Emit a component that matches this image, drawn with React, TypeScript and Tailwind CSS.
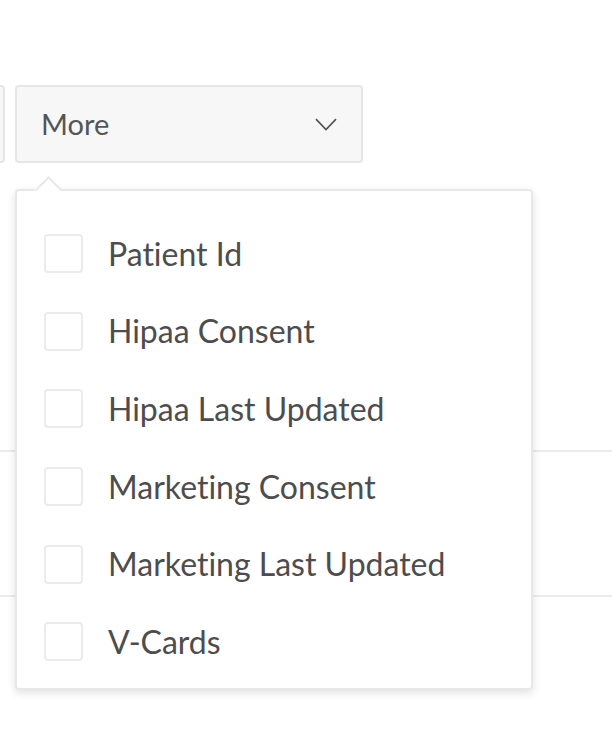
const columns = [
  "Patient Id",
  "Hipaa Consent",
  "Hipaa Last Updated",
  "Marketing Consent",
  "Marketing Last Updated",
  "V-Cards",
];

export default function App() {
  return (
    <div className="relative h-[742px] w-[612px] overflow-hidden bg-white font-['Lato','Noto_Sans',sans-serif] text-[#4d4d4d] [font-variant-ligatures:none]">
      {/* filter bar */}
      <div className="flex gap-[10px] pt-[85px]">
        <div className="-ml-[35px] h-[78px] w-[40px] shrink-0 rounded-[4px] border-2 border-[#e6e6e6] bg-[#f7f7f7]" />
        <div className="relative">
          <button className="flex h-[78px] w-[348px] items-center justify-between rounded-[4px] border-2 border-[#e6e6e6] bg-[#f7f7f7] pl-[24px] pr-[24px] text-[29px] text-[#555]">
            <span>More</span>
            <svg width="22" height="13" viewBox="0 0 22 13" fill="none">
              <polyline points="1,1.2 11,11.5 21,1.2" stroke="#555" strokeWidth="1.7" />
            </svg>
          </button>

          {/* dropdown menu */}
          <div className="absolute left-0 top-full z-10 mt-[26px] w-[518px] rounded-[4px] border-2 border-[#e8e8e8] bg-white pb-[7px] pt-[24px] shadow-[0_3px_8px_rgba(0,0,0,0.12)]">
            <div className="absolute -top-[11px] left-[22px] h-[19px] w-[19px] rotate-45 border-l-2 border-t-2 border-[#e8e8e8] bg-white" />
            {columns.map((c) => (
              <label key={c} className="flex h-[77.6px] cursor-pointer items-center gap-[25px] pl-[27px]">
                <span className="h-[39px] w-[39px] shrink-0 rounded-[4px] border-2 border-[#ebebeb] bg-white" />
                <span className="text-[32px] leading-none">{c}</span>
              </label>
            ))}
          </div>
        </div>
      </div>

      {/* table rows behind */}
      <div className="mt-[287px] divide-y-2 divide-[#ebebeb] border-t-2 border-[#ebebeb]">
        <div className="h-[145px]" />
        <div className="h-[145px]" />
      </div>
    </div>
  );
}
